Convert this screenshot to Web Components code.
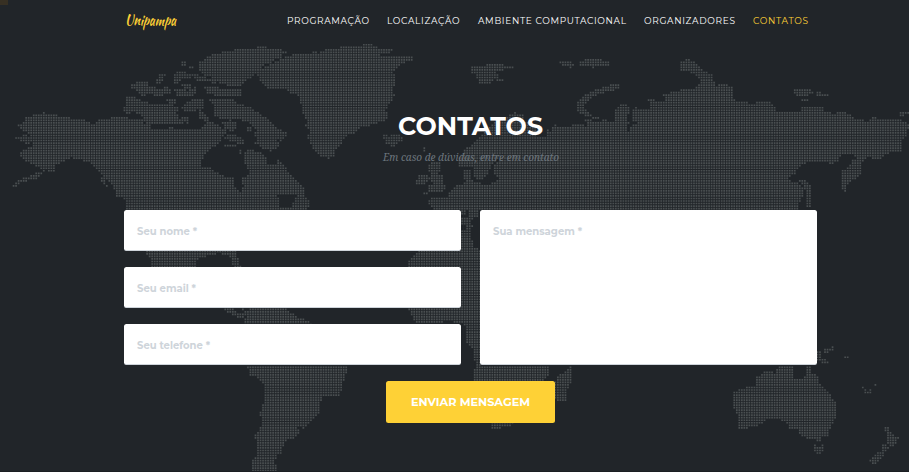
<!DOCTYPE html>
<html lang="pt-BR">
<head>
<meta charset="utf-8">
<title>Contatos</title>
<style>
html,body{margin:0;height:100%;overflow:hidden;background:#212529}
</style>
</head>
<body>
<contact-page></contact-page>
<script>
// Text set to an exact advance width.
class FitText extends HTMLElement {
  connectedCallback() {
    const a = n => this.getAttribute(n);
    const w = +a('width'), s = +a('size'), h = Math.ceil(s * 1.5);
    const root = this.attachShadow({mode: 'open'});
    root.innerHTML = `<style>:host{display:block;width:${w}px;height:${h}px;flex:none}
      svg{display:block;overflow:visible}
      text{font:${a('face') || "400 10px Montserrat,Inter,'Open Sans',sans-serif"};font-size:${s}px;fill:currentColor}</style>
      <svg width="${w}" height="${h}"><text x="0" y="${s * 1.1}" textLength="${w}" lengthAdjust="${a('adjust') || 'spacingAndGlyphs'}"></text></svg>`;
    root.querySelector('text').textContent = a('label');
  }
}
customElements.define('fit-text', FitText);

// World map made of a regular lattice of dots; outlines use three units per pixel.
const LAND = [
 // North America
 '130,336 155,345 210,348 215,357 250,357 262,363 275,373 290,370 300,358 320,355 345,352 370,350 395,357 425,360 430,370 450,376 455,386 500,388 510,380 530,388 555,388 600,385 610,375 632,362 640,368 655,378 665,388 678,392 675,400 662,415 668,425 655,430 640,442 625,452 610,470 603,485 604,497 630,503 650,518 675,530 700,535 703,560 715,575 725,572 730,560 728,535 745,525 745,510 733,490 733,460 740,450 760,452 790,460 800,475 803,495 830,490 835,480 850,492 860,510 875,530 895,545 909,558 915,575 912,583 825,584 840,600 840,620 875,625 885,600 880,590 912,583 925,600 930,620 910,632 378,632 375,598 350,588 345,570 335,550 320,535 300,515 285,505 270,488 240,478 210,473 195,482 185,487 165,495 165,510 150,520 140,510 130,515 115,530 110,540 85,540 60,550 45,560 37,557 50,542 80,530 105,522 130,510 110,500 90,490 70,480 55,465 60,455 75,448 98,440 98,428 75,430 50,418 48,412 70,405 90,408 85,398 65,390 55,375 75,365 80,352 100,345 120,345',
 '304,530 314,530 314,545 328,560 318,560 304,545',
 '437,753 710,753 712,775 722,802 702,802 690,765 650,760 645,768 600,770 588,785 588,802 450,802 452,778 437,762',
 '672,924 700,924 712,938 735,938 728,928 745,933 752,924 850,924 870,935 890,952 930,962 935,975 735,975 738,950 715,952 690,942',
 // South America
 '735,1095 1043,1095 1036,1125 1030,1145 1020,1185 990,1187 970,1190 960,1210 955,1240 940,1258 925,1270 912,1288 907,1283 890,1282 900,1300 885,1315 857,1318 853,1340 845,1345 845,1360 832,1365 830,1380 815,1385 830,1400 830,1416 758,1416 755,1385 768,1370 768,1340 770,1325 763,1305 780,1290 785,1265 780,1240 788,1215 795,1195 795,1150 785,1145 770,1130 752,1125 748,1110',
 // Arctic archipelago
 '375,290 405,292 410,298 435,305 470,315 505,312 535,322 530,340 535,360 560,360 545,372 500,373 440,370 435,362 425,345 400,335 385,342 370,330 378,312',
 '390,265 400,250 420,243 448,243 445,255 465,262 480,270 500,255 515,270 515,285 490,285 470,290 450,280 430,288 415,282 410,272',
 '468,240 480,222 495,222 492,240 480,250 468,248','525,270 545,262 560,275 590,260 585,285 550,290 528,285',
 '543,184 556,184 556,195 543,195','565,197 578,197 578,204 565,204',
 '527,215 550,213 570,225 575,235 560,240 545,235 530,250 520,248','580,215 600,230 630,235 655,245 640,250 620,240 590,245 575,225',
 '545,255 570,255 570,265 550,265',
 '595,190 610,180 635,163 680,153 710,148 770,145 775,137 795,137 800,145 850,150 860,158 845,165 840,175 820,180 815,192 790,195 785,205 770,215 765,225 740,240 725,255 690,258 665,252 640,240 635,230 615,225 600,210',
 '615,260 650,255 665,270 720,270 725,285 700,290 650,288 620,280','500,300 530,300 525,312 505,312',
 '560,310 580,298 610,300 612,325 590,328 580,338 550,330 545,318','600,330 620,345 625,365 605,360 595,345','545,350 560,345 570,368 560,372',
 '620,297 700,297 715,312 745,318 770,335 800,355 815,365 830,385 860,400 855,410 845,425 820,405 835,425 840,440 815,453 790,445 765,430 775,425 765,405 770,390 755,370 730,362 700,358 690,362 640,350 640,310',
 '665,365 705,365 708,385 695,395 675,385','741,382 753,382 753,394 741,394','680,405 700,400 730,420 745,428 715,430 690,425 675,415','665,432 690,432 715,438 712,444 680,442','718,450 725,450 725,463 718,463',
 // Greenland, Iceland
 '770,215 800,200 830,185 870,165 909,160 935,163 940,152 955,160 975,148 1030,140 1090,135 1095,128 1110,130 1140,145 1175,148 1170,157 1100,160 1170,168 1235,168 1235,180 1210,190 1190,205 1180,215 1185,250 1180,260 1182,290 1170,310 1155,330 1165,345 1155,362 1125,372 1080,382 1060,400 1035,410 1025,430 1010,445 1000,470 985,476 965,468 945,455 930,430 925,410 930,390 918,380 920,360 915,345 905,330 903,310 900,290 875,280 860,268 820,268 795,262 780,240 770,225',
 '1144,400 1158,400 1165,410 1175,402 1200,405 1212,415 1195,430 1178,440 1160,430 1150,415','1267,441 1275,441 1275,455 1267,455',
 // Svalbard, Franz Josef, Novaya Zemlya
 '1412,205 1420,198 1455,200 1465,190 1500,190 1525,200 1545,202 1510,210 1490,215 1495,235 1480,240 1460,255 1435,248 1430,225 1415,218','1490,232 1515,238 1505,248 1488,242',
 '1665,182 1705,183 1725,198 1712,204 1690,195','1730,190 1770,175 1818,182 1831,192 1818,198 1780,203 1740,196',
 '1860,250 1860,264 1835,272 1800,280 1780,290 1760,305 1752,325 1775,345 1800,352 1790,360 1770,350 1750,345 1728,332 1730,305 1750,290 1780,272 1810,262 1840,250',
 // British Isles
 '1284,495 1294,485 1319,485 1324,505 1314,520 1329,530 1326,548 1339,555 1334,570 1314,577 1289,575 1284,560 1299,550 1286,535 1294,520 1284,510','1259,520 1282,520 1282,540 1269,555 1245,553','1267,575 1287,575 1287,584 1267,584',
 // Eurasia
 '1310,632 1290,615 1280,600 1300,594 1345,592 1350,575 1370,558 1385,552 1400,545 1388,525 1390,510 1408,510 1410,535 1425,548 1460,552 1490,548 1497,530 1482,520 1478,500 1500,480 1518,465 1512,455 1488,480 1476,495 1460,525 1450,540 1428,540 1420,520 1422,500 1408,500 1378,497 1372,480 1395,450 1420,430 1440,410 1465,385 1485,365 1510,350 1530,345 1545,338 1575,348 1565,362 1610,378 1628,390 1620,400 1590,390 1610,412 1640,410 1640,390 1660,400 1655,382 1665,375 1700,385 1715,375 1740,370 1755,378 1770,370 1815,360 1835,370 1850,365 1840,350 1845,330 1860,315 1880,315 1890,330 1882,345 1885,370 1878,395 1890,400 1895,375 1925,375 1900,365 1895,345 1905,320 1920,330 1945,330 1950,320 1945,300 1960,300 1985,305 2000,300 1990,285 2020,275 2055,268 2090,262 2105,240 2090,230 2075,218 2045,215 2038,205 2040,185 2065,178 2080,185 2100,205 2115,215 2140,222 2135,240 2150,257 2175,250 2200,265 2202,300 2235,305 2255,312 2280,303 2305,305 2325,320 2330,338 2345,333 2400,335 2410,320 2465,320 2475,335 2500,340 2530,335 2560,350 2565,360 2610,362 2620,350 2645,358 2700,360 2727,373 2720,400 2708,420 2705,455 2675,455 2655,465 2635,478 2600,470 2585,485 2580,520 2560,540 2535,560 2535,576 2525,570 2525,515 2545,500 2560,480 2575,470 2550,465 2525,465 2510,485 2495,493 2480,483 2440,487 2410,490 2395,505 2385,520 2365,535 2370,545 2392,545 2410,570 2405,600 2395,615 2395,632',
 '2400,542 2420,542 2430,555 2430,585 2440,590 2430,600 2430,622 2420,622 2418,570','2700,335 2728,335 2728,345 2700,347',
 '2380,270 2395,265 2430,267 2440,277 2425,287 2390,287','2448,274 2485,282 2487,289 2450,287','2402,297 2425,297 2432,308 2402,305','1755,360 1772,360 1772,375 1760,372',
 // Mediterranean, Africa
 '1384,632 1400,632 1395,645 1384,645','1404,632 1436,632 1436,650 1420,650 1412,670 1420,682 1402,690 1402,672 1384,672 1384,650 1404,650','1384,692 1410,692 1420,745 1440,747 1440,980 1380,972 1345,960 1320,970 1250,968 1235,945 1222,924 1384,924 1384,802 1222,802 1230,780 1245,765 1260,752 1384,750',
 '1400,970 1440,970 1440,1095 1427,1095 1420,1045 1400,1028',
 '1430,1095 1648,1095 1648,1125 1630,1145 1420,1145 1420,1120','1670,1128 1700,1112 1715,1095 1718,1140 1705,1160 1695,1203 1668,1203 1662,1165','1470,1260 1550,1260 1530,1278 1485,1286 1475,1286',
 // Oceania
 '2203,1175 2225,1167 2265,1155 2265,1130 2285,1125 2300,1112 2325,1118 2335,1100 2338,1095 2378,1095 2378,1120 2385,1138 2412,1138 2420,1120 2418,1095 2434,1095 2436,1118 2450,1125 2455,1150 2475,1165 2495,1190 2508,1215 2508,1250 2495,1275 2480,1310 2430,1317 2405,1310 2395,1290 2370,1288 2365,1270 2340,1258 2300,1256 2280,1275 2240,1285 2218,1285 2215,1250 2200,1215',
 '2442,1334 2455,1340 2470,1334 2472,1348 2460,1362 2445,1358','2447,1313 2462,1313 2462,1325 2447,1325',
 '2653,1280 2662,1280 2680,1308 2700,1310 2690,1325 2680,1340 2660,1335 2665,1315','2650,1335 2668,1338 2655,1355 2640,1380 2625,1395 2608,1385 2625,1365 2645,1350',
 '2445,1052 2463,1052 2463,1073 2478,1076 2487,1090 2470,1088 2445,1075','2472,1045 2492,1045 2495,1036 2502,1036 2502,1050 2480,1058 2472,1056',
 '2532,1066 2548,1066 2548,1074 2532,1074','2585,1158 2593,1158 2593,1166 2585,1166','2593,1166 2601,1166 2601,1172 2610,1172 2610,1166 2617,1166 2617,1174 2607,1180 2597,1180','2624,1150 2632,1150 2632,1158 2624,1158'
].map(s => s.split(' ').map(p => p.split(',').map(Number)));

function dotPath() {
  const pitch = 2.52, size = 1.7, slack = 1, cells = new Set();
  for (const poly of LAND) {
    const ys = poly.map(p => p[1]);
    const r0 = Math.ceil((Math.min(...ys) / 3 - 1.92) / pitch), r1 = Math.floor((Math.max(...ys) / 3 - 1.92) / pitch);
    for (let r = r0; r <= r1; r++) {
      const y = (1.92 + r * pitch) * 3, hits = [];
      poly.forEach(([x1, y1], i) => {
        const [x2, y2] = poly[(i + 1) % poly.length];
        if ((y1 > y) !== (y2 > y)) hits.push(x1 + (y - y1) * (x2 - x1) / (y2 - y1));
      });
      hits.sort((a, b) => a - b);
      for (let i = 0; i + 1 < hits.length; i += 2)
        for (let c = Math.ceil(((hits[i] - slack) / 3 - .96) / pitch); (.96 + c * pitch) * 3 <= hits[i + 1] + slack; c++) cells.add(c + ',' + r);
    }
  }
  let d = '';
  for (const k of cells) {
    const [c, r] = k.split(',');
    d += `M${(.96 + c * pitch - size / 2).toFixed(2)} ${(1.92 + r * pitch - size / 2).toFixed(2)}h${size}v${size}h-${size}z`;
  }
  return d;
}
class DottedMap extends HTMLElement {
  connectedCallback() {
    this.attachShadow({mode: 'open'}).innerHTML = `<style>:host{display:block}svg{display:block}</style>
    <svg width="909" height="472"><path fill="#4a4f51" d="${dotPath()}"/></svg>`;
  }
}
customElements.define('dotted-map', DottedMap);

class NavBar extends HTMLElement {
  connectedCallback() {
    this.attachShadow({mode: 'open'}).innerHTML = `<style>
    :host{display:flex;box-sizing:border-box;height:42px;padding:10px 101px 0 124.5px;justify-content:space-between;color:#fff}
    .logo{color:#fed136}
    nav{display:flex;gap:18.2px;padding-top:3.6px}
    .on{color:#fed136}</style>
    <fit-text class="logo" label="Unipampa" width="51" size="13.5" face="400 14px 'Kaushan Script',Lato,sans-serif"></fit-text>
    <nav><fit-text label="PROGRAMAÇÃO" width="82" size="9" adjust="spacing"></fit-text>
    <fit-text label="LOCALIZAÇÃO" width="72.5" size="9" adjust="spacing"></fit-text>
    <fit-text label="AMBIENTE COMPUTACIONAL" width="148" size="9" adjust="spacing"></fit-text>
    <fit-text label="ORGANIZADORES" width="91" size="9" adjust="spacing"></fit-text>
    <fit-text class="on" label="CONTATOS" width="55" size="9" adjust="spacing"></fit-text></nav>`;
  }
}
customElements.define('nav-bar', NavBar);

class FormField extends HTMLElement {
  connectedCallback() {
    this.attachShadow({mode: 'open'}).innerHTML = `<style>
    :host{display:block;box-sizing:border-box;background:#fff;border-radius:2.5px;border-bottom:1px solid #ced4da;padding:13.5px 13px;color:#ced4da}</style>
    <fit-text label="${this.getAttribute('label')}" width="${this.getAttribute('text-width')}" size="10.2" face="700 10px Montserrat,Inter,'Open Sans',sans-serif"></fit-text>`;
  }
}
customElements.define('form-field', FormField);

class SubmitButton extends HTMLElement {
  connectedCallback() {
    this.attachShadow({mode: 'open'}).innerHTML = `<style>:host{display:block}
    button{all:unset;display:flex;box-sizing:border-box;width:169px;height:42px;justify-content:center;padding-top:11.9px;border-radius:2.5px;background:#fed136;color:#fff}</style>
    <button><fit-text label="ENVIAR MENSAGEM" width="119" size="11.4" face="700 11px Montserrat,Inter,'Open Sans',sans-serif"></fit-text></button>`;
  }
}
customElements.define('submit-button', SubmitButton);

class ContactPage extends HTMLElement {
  connectedCallback() {
    this.attachShadow({mode: 'open'}).innerHTML = `<style>
    :host{display:block;position:relative;box-sizing:border-box;width:909px;height:472px;background:#212529;border-bottom:1px solid #1b1e22;overflow:hidden}
    dotted-map{position:absolute;inset:0}
    .corner{position:absolute;left:0;top:0;width:8px;height:5px;background:#373023}
    main{position:relative}
    header{display:flex;flex-direction:column;align-items:center;padding:65px 0 0 32px;height:103px;color:#fff}
    .sub{color:#6c757d;margin-top:4px}
    form{display:grid;grid-template-columns:337px 337px;grid-template-rows:41px 41px 41px;column-gap:19px;row-gap:16px;padding-left:124px}
    .msg{grid-column:2;grid-row:1/4}
    footer{display:flex;padding:16px 0 0 386px}
    </style>
    <dotted-map></dotted-map><div class="corner"></div>
    <main><nav-bar></nav-bar>
    <header><fit-text label="CONTATOS" width="145" size="25" face="700 24px Montserrat,Inter,'Open Sans',sans-serif"></fit-text>
    <fit-text class="sub" label="Em caso de dúvidas, entre em contato" width="176" size="10.6" face="italic 400 11px 'Droid Serif','Noto Serif','Liberation Serif',serif"></fit-text></header>
    <form><form-field label="Seu nome *" text-width="60"></form-field><form-field class="msg" label="Sua mensagem *" text-width="89"></form-field>
    <form-field label="Seu email *" text-width="59"></form-field><form-field label="Seu telefone *" text-width="73"></form-field></form>
    <footer><submit-button></submit-button></footer></main>`;
  }
}
customElements.define('contact-page', ContactPage);
</script>
</body>
</html>
